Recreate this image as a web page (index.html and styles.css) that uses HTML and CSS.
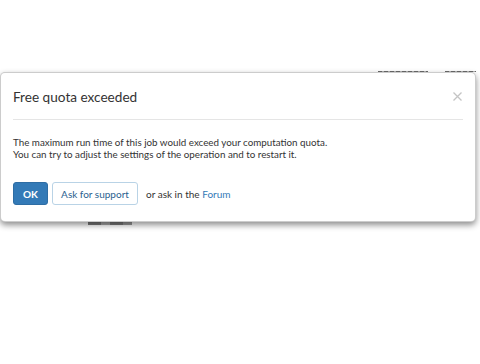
FILE: index.html
```html
<!DOCTYPE html>
<html lang="en">
<head>
    <meta charset="UTF-8">
    <title>Free quota exceeded</title>
    <link rel="stylesheet" href="styles.css">
</head>
<body>
    <div class="page">
        <div class="page-nav">
            <span class="nav-bit nav-bit-wide"></span>
            <span class="nav-bit"></span>
        </div>
        <div class="page-shade"></div>
    </div>

    <div class="modal">
        <div class="modal-dialog">
            <div class="modal-header">
                <h4 class="modal-title">Free quota exceeded</h4>
                <button class="close" aria-label="Close">
                    <svg width="9" height="9" viewBox="0 0 9 9">
                        <path d="M0.5 0.5 L8.5 8.5 M8.5 0.5 L0.5 8.5" stroke="#c4c4c4" stroke-width="1.3" fill="none"/>
                    </svg>
                </button>
            </div>
            <div class="modal-body">
                <p>The maximum run time of this job would exceed your computation quota.<br>
                You can try to adjust the settings of the operation and to restart it.</p>
            </div>
            <div class="modal-footer">
                <button class="btn btn-primary">OK</button>
                <button class="btn btn-default">Ask for support</button>
                <span class="footer-note">or ask in the <a href="#">Forum</a></span>
            </div>
        </div>
    </div>
</body>
</html>
```

FILE: styles.css
```css
:root {
    --primary: #337ab7;
    --primary-dark: #2e6da4;
    --text: #333333;
    --line: #e5e5e5;
}

* {
    margin: 0;
    padding: 0;
    box-sizing: border-box;
}

body {
    font-family: 'Lato', 'Liberation Sans', sans-serif;
    background: #ffffff;
    color: var(--text);
    width: 480px;
    height: 364px;
    overflow: hidden;
    position: relative;
}

/* page behind the dialog, only a few pixels peek out */
.page-nav {
    position: absolute;
    top: 71px;
    left: 378px;
    display: flex;
    gap: 17px;
}

.nav-bit {
    display: block;
    width: 31px;
    height: 1px;
    background: repeating-linear-gradient(90deg, #6a6a6a 0 4px, #b0b0b0 4px 6px);
}

.nav-bit-wide {
    width: 50px;
}

.page-shade {
    position: absolute;
    top: 222px;
    left: 88px;
    width: 44px;
    height: 3px;
    background: linear-gradient(90deg, #7a7a7a 0 30%, #a8a8a8 30% 50%, #7a7a7a 50% 80%, #9a9a9a 80%);
}

.modal {
    position: absolute;
    top: 72px;
    left: 0;
}

.modal-dialog {
    width: 476px;
    background: #ffffff;
    border: 1px solid rgba(0, 0, 0, 0.2);
    border-radius: 5px;
    box-shadow: 0 3px 6px rgba(0, 0, 0, 0.45);
}

.modal-header {
    margin: 0 12px;
    height: 47px;
    border-bottom: 1px solid var(--line);
    display: flex;
    align-items: center;
    justify-content: space-between;
}

.modal-title {
    font-size: 13.6px;
    font-weight: 400;
    color: var(--text);
    padding-top: 2px;
}

.close {
    background: none;
    border: 0;
    display: flex;
    margin-right: 1px;
    margin-top: 1px;
}

.modal-body {
    padding: 16px 12px 0;
}

.modal-body p {
    font-size: 9.8px;
    line-height: 12px;
}

.modal-footer {
    padding: 22px 12px 16px;
    display: flex;
    align-items: center;
    gap: 4px;
}

.btn {
    font-family: inherit;
    font-size: 10px;
    height: 23px;
    border-radius: 3px;
    padding: 0 10px;
    cursor: pointer;
}

.btn-primary {
    background: var(--primary);
    border: 1px solid var(--primary-dark);
    color: #ffffff;
    font-weight: 700;
    width: 35px;
    padding: 0;
}

.btn-default {
    background: #ffffff;
    border: 1px solid #b9d3e6;
    color: #2a5f8f;
    width: 86px;
    padding: 0;
}

.footer-note {
    font-size: 10px;
    margin-left: 4px;
}

.footer-note a {
    color: var(--primary);
    text-decoration: none;
}
```
